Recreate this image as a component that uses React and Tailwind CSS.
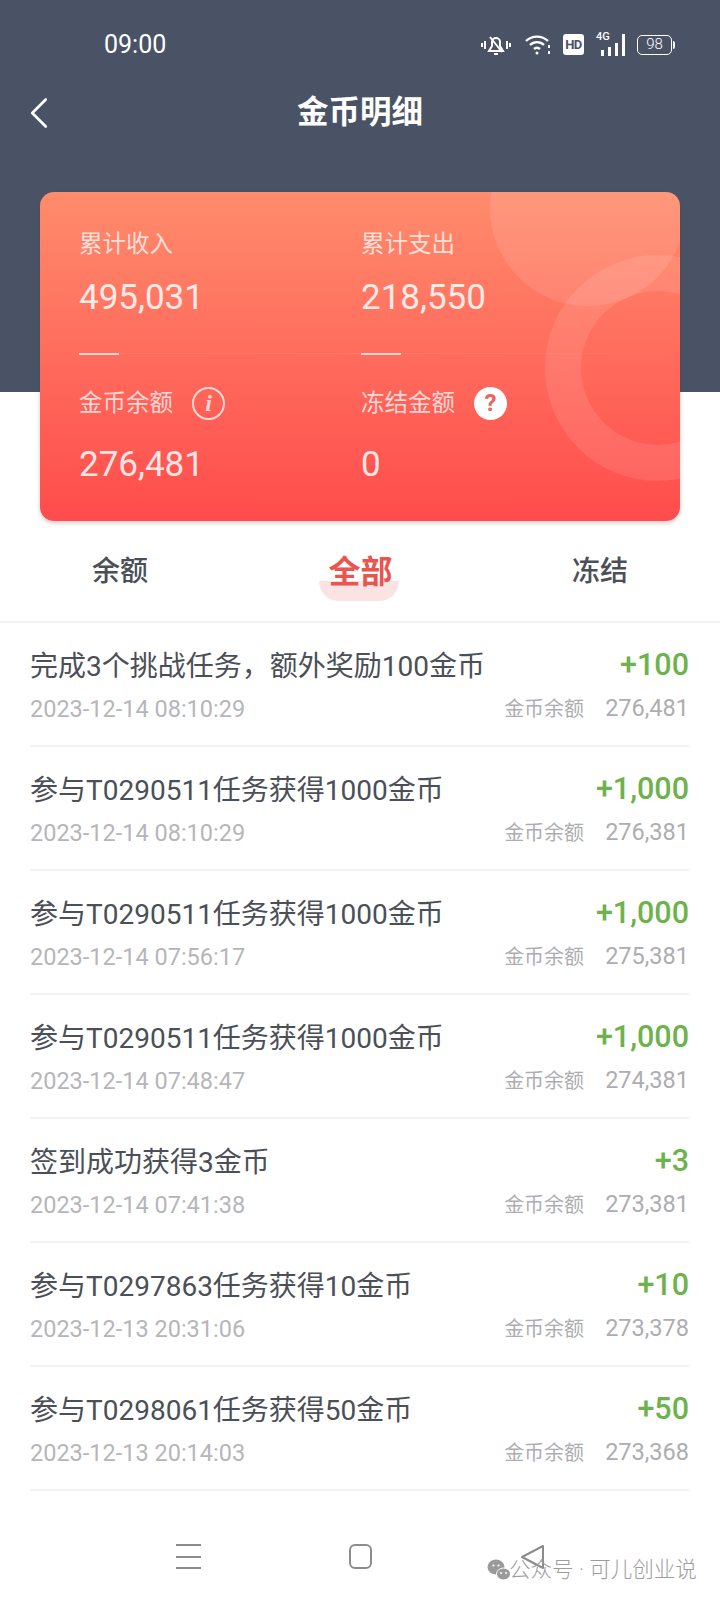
import { ChevronLeft } from "lucide-react";

const FONT = "font-['Roboto','Noto_Sans_CJK_SC',sans-serif]";

const RECORDS = [
  { title: "完成3个挑战任务，额外奖励100金币", time: "2023-12-14 08:10:29", amount: "+100", balance: "276,481" },
  { title: "参与T0290511任务获得1000金币", time: "2023-12-14 08:10:29", amount: "+1,000", balance: "276,381" },
  { title: "参与T0290511任务获得1000金币", time: "2023-12-14 07:56:17", amount: "+1,000", balance: "275,381" },
  { title: "参与T0290511任务获得1000金币", time: "2023-12-14 07:48:47", amount: "+1,000", balance: "274,381" },
  { title: "签到成功获得3金币", time: "2023-12-14 07:41:38", amount: "+3", balance: "273,381" },
  { title: "参与T0297863任务获得10金币", time: "2023-12-13 20:31:06", amount: "+10", balance: "273,378" },
  { title: "参与T0298061任务获得50金币", time: "2023-12-13 20:14:03", amount: "+50", balance: "273,368" },
];

function StatusIcons() {
  return (
    <div className="flex items-center">
      <svg width="30" height="24" viewBox="0 0 30 24" fill="none" stroke="white" strokeWidth="2">
        <path d="M1 10v4M4 8v8M26 8v8M29 10v4" />
        <path d="M8 18h14l-3-5V9a4 4 0 0 0-8 0v4zM13 21h4M9 4l12 15" />
      </svg>
      <svg className="ml-[14px]" width="27" height="22" viewBox="0 0 27 22" fill="none" stroke="white" strokeWidth="2.4">
        <path d="M1 7a16 16 0 0 1 22 0M5 11a10 10 0 0 1 14 0M9 15a4.500 4.500 0 0 1 6 0" />
        <circle cx="12" cy="19" r="1.500" fill="white" stroke="none" />
        <path d="M24 11v3M24 17v3" strokeWidth="2" />
      </svg>
      <span className="ml-[11px] flex h-[21px] w-[21px] items-center justify-center rounded-[3px] bg-white text-[13px] font-bold tracking-[-0.5px] text-[#4a5366]">HD</span>
      <div className="relative ml-[12px] flex h-[22px] w-[29px] items-end justify-end gap-[4px]">
        <span className="absolute left-0 top-[-3px] text-[11px] font-medium leading-[12px] text-white">4G</span>
        <span className="h-[6px] w-[3px] bg-white" />
        <span className="h-[9px] w-[3px] bg-white" />
        <span className="h-[13px] w-[3px] bg-white" />
        <span className="h-[22px] w-[3px] bg-white" />
      </div>
      <div className="ml-[12px] flex items-center">
        <span className="flex h-[20px] w-[35px] items-center justify-center rounded-[5px] border-[1.5px] border-white text-[15px] font-light leading-none text-white">98</span>
        <span className="ml-[1px] h-[8px] w-[2px] rounded-r bg-white" />
      </div>
    </div>
  );
}

function Stat({ label, value, icon, gap }) {
  return (
    <div>
      <div className="flex h-[32px] items-center text-[23.500px] leading-[32px] text-white/75">
        {label}
        {icon}
      </div>
      <div className={`${gap} text-[35px] leading-[40px] text-white/85`}>{value}</div>
    </div>
  );
}

function Record({ title, time, amount, balance }) {
  return (
    <div className="h-[124px] border-b-2 border-[#f2f2f3] pt-[24px]">
      <div className="flex h-[40px] items-center justify-between">
        <span className="text-[28px] leading-[40px] text-[#4b4f57]">{title}</span>
        <span className="pb-[4px] text-[30.500px] font-medium leading-[40px] text-[#6db24c]">{amount}</span>
      </div>
      <div className="mt-[6px] flex h-[32px] items-center justify-between">
        <span className="text-[23.500px] leading-[32px] text-[#b6b6ba]">{time}</span>
        <span className="flex items-center text-[#adadb2]">
          <span className="text-[20px]">金币余额</span>
          <span className="ml-[21px] text-[23.500px]">{balance}</span>
        </span>
      </div>
    </div>
  );
}

export default function App() {
  return (
    <div className={`relative h-[1600px] w-[720px] overflow-hidden bg-white ${FONT}`}>
      <div className="h-[392px] bg-[#4a5366]">
        <div className="flex h-[88px] items-center justify-between pl-[104px] pr-[45px] pt-[1px]">
          <span className="text-[25px] text-white">09:00</span>
          <StatusIcons />
        </div>
        <div className="relative flex h-[50px] items-center justify-center">
          <ChevronLeft className="absolute left-[12px] top-[-2px] h-[54px] w-[54px] text-white" strokeWidth={1.200} />
          <span className="text-[31.500px] font-bold text-white">金币明细</span>
        </div>
      </div>

      <div className="relative mx-[40px] -mt-[200px] h-[329px] overflow-hidden rounded-[14px] bg-[linear-gradient(180deg,#ff8c6c_0%,#ff6f5e_45%,#ff4c4c_100%)] pl-[39px] pt-[36px] shadow-[0_2px_4px_rgba(120,40,40,0.25)]">
        <div className="absolute left-[450px] top-[-82px] h-[196px] w-[196px] rounded-full bg-white/10" />
        <div className="absolute left-[505px] top-[63px] h-[226px] w-[226px] rounded-full border-[36px] border-white/10" />

        <div className="relative grid grid-cols-[282px_1fr]">
          <Stat label="累计收入" value="495,031" gap="mt-[18px]" />
          <Stat label="累计支出" value="218,550" gap="mt-[18px]" />
        </div>
        <div className="relative mt-[35px] grid h-[1px] grid-cols-[282px_1fr] bg-gradient-to-r from-white/5 via-white/10 to-transparent">
          <span className="h-[1.500px] w-[40px] bg-white/70" />
          <span className="h-[1.500px] w-[40px] bg-white/70" />
        </div>
        <div className="relative mt-[33px] grid grid-cols-[282px_1fr]">
          <Stat
            label="金币余额"
            value="276,481"
            gap="mt-[26px]"
            icon={
              <span className="ml-[19px] flex h-[33px] w-[33px] items-center justify-center rounded-full border-2 border-white/75 font-['Liberation_Serif',serif] text-[24px] font-bold italic">
                i
              </span>
            }
          />
          <Stat
            label="冻结金额"
            value="0"
            gap="mt-[26px]"
            icon={
              <span className="ml-[19px] flex h-[33px] w-[33px] items-center justify-center rounded-full bg-white text-[24px] font-bold text-[#e9645c]">
                ?
              </span>
            }
          />
        </div>
      </div>

      <div className="grid h-[102px] grid-cols-3 items-center border-b-2 border-[#f2f2f3] pt-[2px]">
        <span className="pl-[92px] text-[28px] font-medium text-[#4b4f57]">余额</span>
        <span className="relative justify-self-center pl-[1px] text-[32px] font-bold text-[#e8564f]">
          <span className="absolute bottom-[-5px] left-[-8px] h-[20px] w-[80px] rounded-b-full rounded-t-[6px] bg-[#fbe3e3]" />
          <span className="relative">全部</span>
        </span>
        <span className="justify-self-end pr-[92px] text-[28px] font-medium text-[#4b4f57]">冻结</span>
      </div>

      <div className="pl-[30px] pr-[31px]">
        {RECORDS.map((r, i) => (
          <Record key={i} {...r} />
        ))}
      </div>

      <div className="mt-[53px] flex items-start">
        <div className="ml-[176px] flex h-[25px] w-[25px] flex-col justify-between">
          <span className="h-[2px] bg-[#8c8c8c]" />
          <span className="h-[2px] bg-[#8c8c8c]" />
          <span className="h-[2px] bg-[#8c8c8c]" />
        </div>
        <span className="ml-[148px] h-[25px] w-[23px] rounded-[6px] border-2 border-[#8c8c8c]" />
        <svg className="ml-[148px]" width="26" height="26" viewBox="0 0 26 26" fill="none" stroke="#8c8c8c" strokeWidth="2" strokeLinejoin="round">
          <path d="M2 13 23 2v22z" />
        </svg>
      </div>

      <div className="absolute left-[487px] top-[1556px] flex items-center text-[21.500px] font-light leading-[28px] text-[#9d9d9d]">
        <svg width="24" height="24" viewBox="0 0 24 24" fill="#9a9a9a">
          <ellipse cx="9" cy="9" rx="8.500" ry="7.500" />
          <ellipse cx="16.500" cy="16" rx="7" ry="6" stroke="white" strokeWidth="1" />
          <circle cx="6.500" cy="7.500" r="1.100" fill="white" />
          <circle cx="11.500" cy="7.500" r="1.100" fill="white" />
          <circle cx="14" cy="15" r="1" fill="white" />
          <circle cx="19" cy="15" r="1" fill="white" />
        </svg>
        <span className="-ml-[2px]">公众号 · 可儿创业说</span>
      </div>
    </div>
  );
}
